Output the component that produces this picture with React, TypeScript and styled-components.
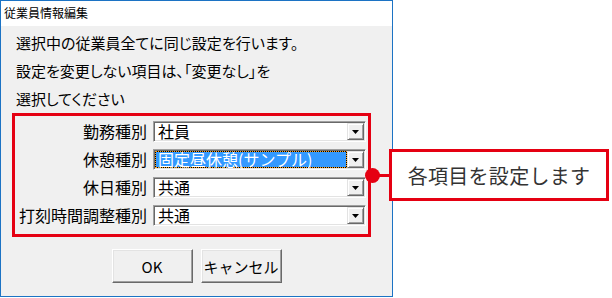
import { createGlobalStyle, styled } from "styled-components"

const GlobalStyle = createGlobalStyle`
  html, body {
    margin: 0;
    padding: 0;
    background: #ffffff;
  }
  body {
    font-family: "Noto Sans CJK JP", "Noto Sans", sans-serif;
    color: #000000;
  }
`

const fields = [
  { label: "勤務種別", value: "社員", selected: false },
  { label: "休憩種別", value: "固定昼休憩(サンプル)", selected: true },
  { label: "休日種別", value: "共通", selected: false },
  { label: "打刻時間調整種別", value: "共通", selected: false },
]

const DropArrow = () => (
  <svg width="7" height="4" viewBox="0 0 7 4">
    <path d="M0 0 H7 L3.5 4 Z" fill="#000" />
  </svg>
)

const ComboBox = ({ value, selected }: { value: string; selected: boolean }) => (
  <Combo>
    <ComboText $selected={selected}>{value}</ComboText>
    <DropButton>
      <DropArrow />
    </DropButton>
  </Combo>
)

export default function App() {
  return (
    <>
      <GlobalStyle />
      <Stage>
        <Dialog>
          <TitleBar>従業員情報編集</TitleBar>
          <Body>
            <Message>
              <div>選択中の従業員全てに同じ設定を行います。</div>
              <div>設定を変更しない項目は、「変更なし」を</div>
              <div>選択してください</div>
            </Message>
            <Frame>
              {fields.map((f) => (
                <Row key={f.label}>
                  <FieldLabel>{f.label}</FieldLabel>
                  <ComboBox value={f.value} selected={f.selected} />
                </Row>
              ))}
            </Frame>
            <Buttons>
              <Button>OK</Button>
              <Button>キャンセル</Button>
            </Buttons>
          </Body>
        </Dialog>
        <Annotation>
          <Dot />
          <Connector />
          <Callout>各項目を設定します</Callout>
        </Annotation>
      </Stage>
    </>
  )
}

const red = "#e50012"

const Stage = styled.div`
  position: relative;
  width: 612px;
  height: 298px;
  display: flex;
  background: #ffffff;
  overflow: hidden;
`
const Dialog = styled.div`
  width: 393px;
  height: 297px;
  box-sizing: border-box;
  border: 1px solid #1c73c4;
  background: #f0f0f0;
  display: flex;
  flex-direction: column;
`
const TitleBar = styled.div`
  height: 25px;
  line-height: 24px;
  padding-left: 3px;
  background: #ffffff;
  font-size: 12px;
`
const Body = styled.div`
  flex: 1;
  padding-top: 3px;
`
const Message = styled.div`
  padding-left: 15px;
  font-size: 15px;
  line-height: 28px;
  font-feature-settings: "palt";
`
const Frame = styled.div`
  margin-left: 11px;
  width: 359px;
  height: 124px;
  box-sizing: border-box;
  border: 3px solid ${red};
  padding: 5px 2px 0 0;
  display: flex;
  flex-direction: column;
  gap: 7px;
`
const Row = styled.div`
  display: grid;
  grid-template-columns: 1fr 213px;
  column-gap: 6px;
  align-items: center;
  height: 21px;
`
const FieldLabel = styled.div`
  text-align: right;
  font-size: 16px;
  line-height: 21px;
  white-space: nowrap;
`
const Combo = styled.div`
  height: 21px;
  box-sizing: border-box;
  display: flex;
  border-style: solid;
  border-width: 1px;
  border-color: #a0a0a0 #ffffff #ffffff #a0a0a0;
  box-shadow: inset 1px 1px 0 #696969, inset -1px -1px 0 #e3e3e3;
  padding: 1px;
  background: #ffffff;
`
const ComboText = styled.div<{ $selected: boolean }>`
  flex: 1;
  min-width: 0;
  box-sizing: border-box;
  border: 1px ${(p) => (p.$selected ? "dotted #ffa31a" : "solid transparent")};
  background: ${(p) =>
    p.$selected
      ? "linear-gradient(#3399ff, #3399ff) padding-box, #000000 border-box"
      : "#ffffff"};
  color: ${(p) => (p.$selected ? "#ffffff" : "#000000")};
  padding-left: 2px;
  font-size: 16px;
  line-height: 15px;
  white-space: nowrap;
`
const DropButton = styled.div`
  width: 17px;
  height: 17px;
  box-sizing: border-box;
  display: flex;
  align-items: center;
  justify-content: center;
  background: #f0f0f0;
  border-style: solid;
  border-width: 1px;
  border-color: #e3e3e3 #696969 #696969 #e3e3e3;
  box-shadow: inset 1px 1px 0 #ffffff, inset -1px -1px 0 #a0a0a0;
`
const Buttons = styled.div`
  display: flex;
  justify-content: center;
  gap: 8px;
  margin-top: 12px;
`
const Button = styled.div`
  width: 81px;
  height: 34px;
  box-sizing: border-box;
  display: flex;
  align-items: center;
  justify-content: center;
  background: #f0f0f0;
  border-style: solid;
  border-width: 1px;
  border-color: #ffffff #696969 #696969 #ffffff;
  box-shadow: inset -1px -1px 0 #a0a0a0, inset 1px 1px 0 #e3e3e3;
  font-size: 15px;
`
const Annotation = styled.div`
  position: absolute;
  left: 365px;
  top: 149px;
  display: flex;
  align-items: center;
`
const Dot = styled.div`
  width: 15px;
  height: 15px;
  border-radius: 50%;
  background: ${red};
`
const Connector = styled.div`
  width: 10px;
  height: 3px;
  margin-left: -1px;
  background: ${red};
`
const Callout = styled.div`
  width: 220px;
  height: 52px;
  box-sizing: border-box;
  border: 3px solid ${red};
  background: #ffffff;
  display: flex;
  align-items: center;
  justify-content: center;
  font-size: 20px;
  color: #333333;
  letter-spacing: 0.3px;
`
